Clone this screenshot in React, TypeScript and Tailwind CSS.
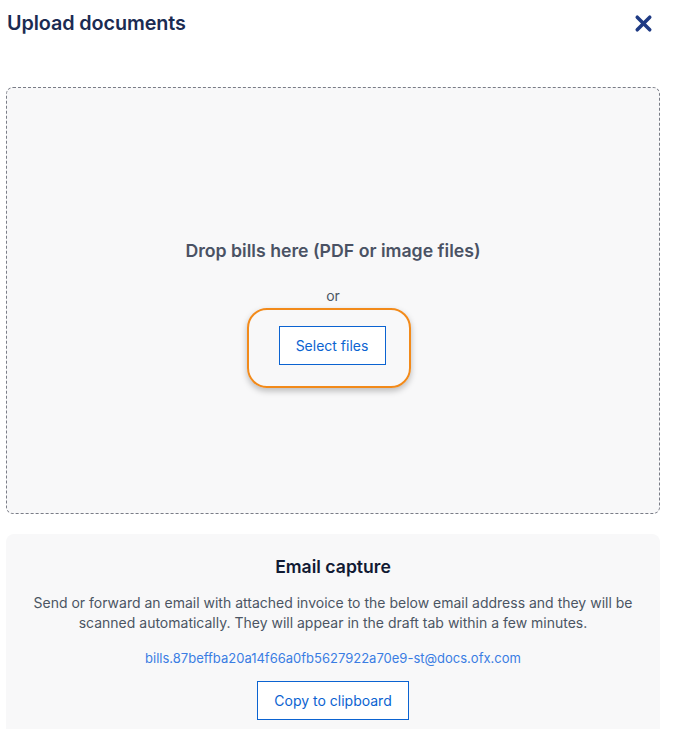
import { X } from 'lucide-react';

export default function App() {
  return (
    <div className="w-[677px] min-h-[729px] bg-white font-['Inter',sans-serif] pl-[6px] pr-[17px]">
      {/* Header */}
      <div className="flex items-center justify-between h-[44px] pt-[3px] pl-[1px]">
        <h1 className="text-[19.8px] font-semibold text-[#1b2b52] tracking-[-0.1px]">Upload documents</h1>
        <button className="mr-[4px] text-[#1f3b84]">
          <X size={25} strokeWidth={3.4} />
        </button>
      </div>

      {/* Drop zone */}
      <div className="mt-[43px] h-[427px] rounded-[7px] border border-dashed border-[#7a7d87] bg-[#f8f8f9] flex flex-col items-center justify-center pt-[2px]">
        <p className="text-[17.7px] leading-[24px] font-semibold text-[#4a5264]">Drop bills here (PDF or image files)</p>
        <p className="mt-[23px] text-[14px] leading-[20px] text-[#4b5563]">or</p>
        {/* highlight ring drawn around the button, takes no space */}
        <div className="-ml-[33px] -mr-[24px] mt-[2px] -mb-[23px] rounded-[20px] border-2 border-[#f28a1a] pl-[30px] pr-[23px] pt-[16px] pb-[21px] shadow-[0_3px_6px_rgba(0,0,0,0.25)]">
          <button className="block h-[39px] w-[107px] border border-[#0b63d1] bg-white text-[14px] text-[#0b63d1]">Select files</button>
        </div>
      </div>

      {/* Email capture */}
      <div className="mt-[20px] rounded-t-[8px] bg-[#f8f8f9] pt-[21px] pb-[20px] flex flex-col items-center text-center">
        <h2 className="text-[17.6px] leading-[24px] font-semibold text-[#111a33]">Email capture</h2>
        <p className="mt-[14px] px-[20px] text-[14px] leading-[20px] text-[#4b5563]">
          Send or forward an email with attached invoice to the below email address and they will be scanned automatically. They will appear in the draft tab within a few minutes.
        </p>
        <p className="mt-[16px] text-[13px] leading-[18px] text-[#3a7de3]">bills.87beffba20a14f66a0fb5627922a70e9-st@docs.ofx.com</p>
        <button className="mt-[14px] h-[39px] w-[152px] border border-[#0b63d1] bg-white text-[14px] text-[#0b63d1]">Copy to clipboard</button>
      </div>
    </div>
  );
}
